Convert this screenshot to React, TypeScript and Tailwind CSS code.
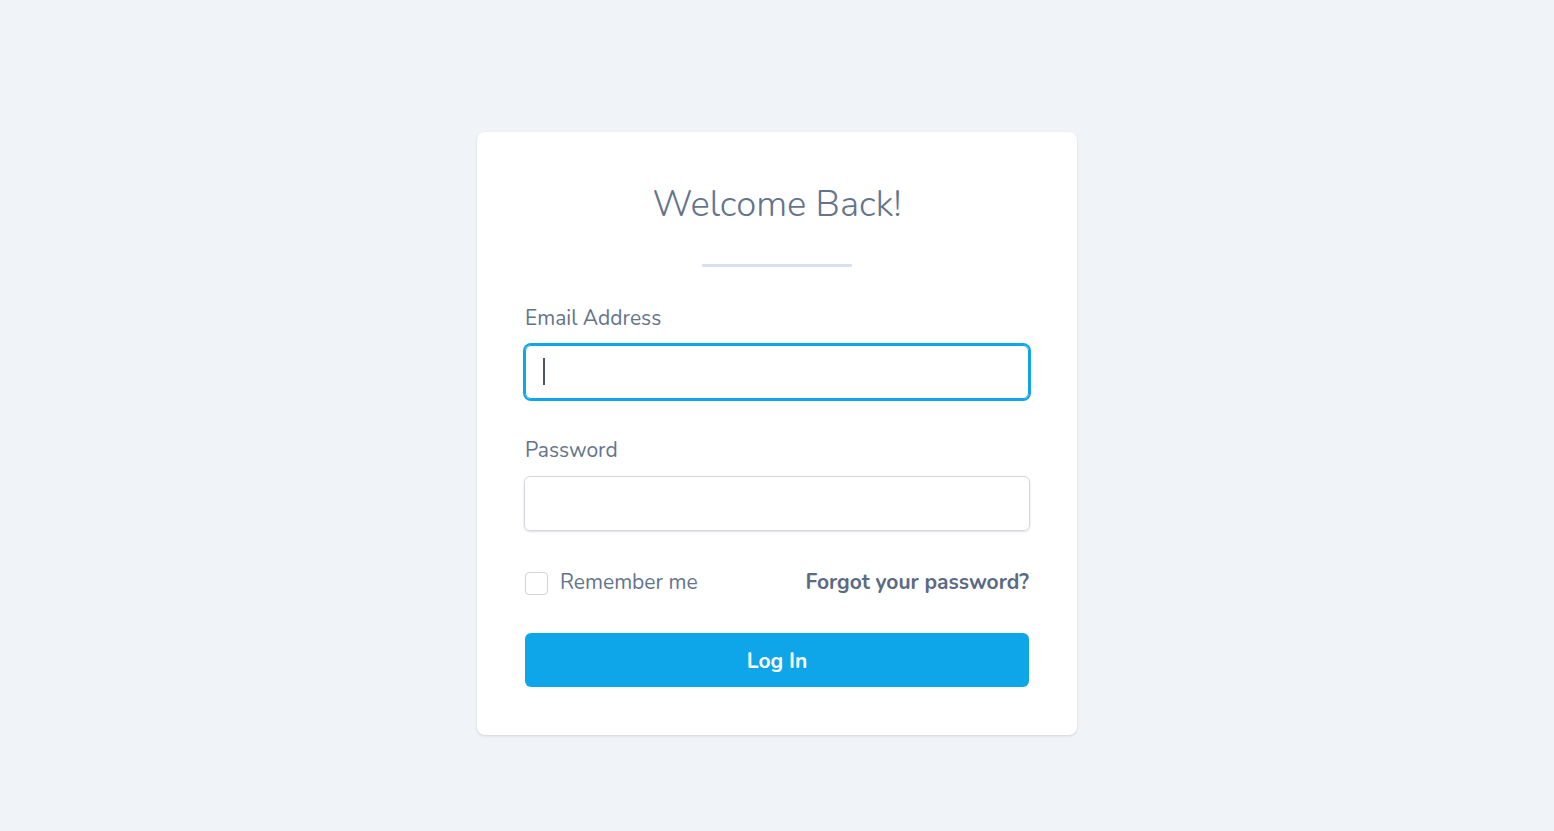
import { useState } from "react";

export default function App() {
  const [email, setEmail] = useState("");
  const [password, setPassword] = useState("");
  const [remember, setRemember] = useState(false);

  return (
    <div
      className="min-h-screen bg-[#f0f4f8] flex justify-center pt-[132px]"
      style={{ fontFamily: '"Nunito", "Noto Sans", "Open Sans", sans-serif' }}
    >
      <div className="w-[600px] h-fit bg-white rounded-lg shadow-sm px-12 pt-[52px] pb-12">
        <h1 className="text-center text-[36.5px] leading-10 font-light text-[#64748b]">
          Welcome Back!
        </h1>
        <div className="mx-auto mt-[40px] w-[150px] h-[3px] bg-[#d9e2ec]" />

        <form onSubmit={(e) => e.preventDefault()}>
          <label className="block mt-[37px] text-[21px] leading-7 text-[#64748b]">
            Email Address
          </label>
          <div className="relative mt-[13px]">
            <input
              type="email"
              value={email}
              onChange={(e) => setEmail(e.target.value)}
              className="block w-full h-[54px] rounded-md border border-[#0ea5e9] ring-2 ring-[#0ea5e9] px-4 text-lg text-[#334155] outline-none caret-transparent"
            />
            {/* text cursor */}
            <span className="absolute left-[18px] top-[13px] w-[2px] h-[27px] bg-[#4a5568]" />
          </div>

          <label className="block mt-[37px] text-[21px] leading-7 text-[#64748b]">
            Password
          </label>
          <input
            type="password"
            value={password}
            onChange={(e) => setPassword(e.target.value)}
            className="block mt-[12px] -mx-px w-[calc(100%+2px)] h-[55px] rounded-md border border-[#d4d8de] shadow-sm px-4 text-lg text-[#334155] outline-none"
          />

          <div className="mt-[38px] flex items-center justify-between h-7">
            <label className="flex items-center gap-3 cursor-pointer">
              <input
                type="checkbox"
                checked={remember}
                onChange={(e) => setRemember(e.target.checked)}
                className="appearance-none w-[23px] h-[23px] rounded border border-[#cfd4da] bg-white"
              />
              <span className="text-[21px] text-[#64748b]">Remember me</span>
            </label>
            <a href="#" className="text-[21px] font-bold text-[#5b6b82]">
              Forgot your password?
            </a>
          </div>

          <button
            type="submit"
            className="mt-[36px] w-full h-[54px] pt-[4px] rounded-md bg-[#0ea5e9] text-white text-[21px] font-bold"
          >
            Log In
          </button>
        </form>
      </div>
    </div>
  );
}
